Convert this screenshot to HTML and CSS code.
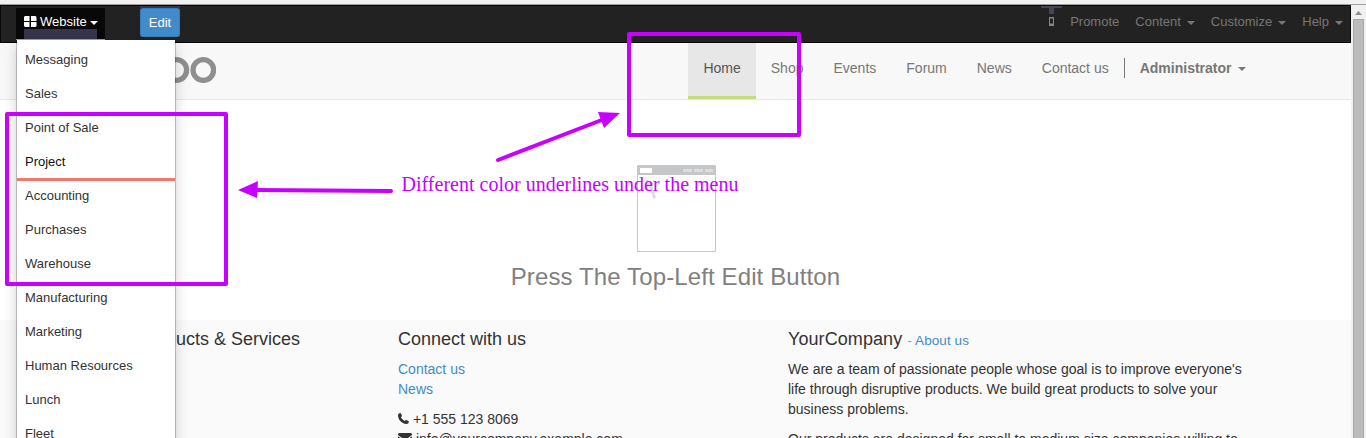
FILE: index.html
```html
<!DOCTYPE html>
<html lang="en">
<head>
<meta charset="utf-8">
<title>Home | YourCompany</title>
<link rel="stylesheet" href="styles.css">
</head>
<body>
<div class="chrome-edge"></div>
<div class="viewport">
  <div class="page">
    <nav class="admin-bar">
      <div class="app-switch">
        <a class="app-toggle">
          <svg class="icon-grid" width="13" height="11" viewBox="0 0 13 11"><path fill="#fff" d="M1 0h4.500v5H0V1zM7 0h4.500l1 1v4H7zM0 6h5.500v5H1l-1-1zM7 6h5.500v4l-1 1H7z"/></svg>
          <span>Website</span><i class="caret"></i>
        </a>
        <ul class="app-menu">
          <li>Messaging</li><li>Sales</li><li>Point of Sale</li><li class="active">Project</li><li>Accounting</li><li>Purchases</li><li>Warehouse</li><li>Manufacturing</li><li>Marketing</li><li>Human Resources</li><li>Lunch</li><li>Fleet</li>
        </ul>
      </div>
      <div class="edit-wrap"><a class="edit">Edit</a></div>
      <div class="tools">
        <a class="mobile"><svg width="21" height="21" viewBox="0 0 21 21"><path fill="#454357" d="M0 0h21v2h-8v6H8V2H0z"/><path fill="#868686" fill-rule="evenodd" d="M8 11h5v9H8zM9 12.500v5h3v-5z"/></svg></a>
        <a>Promote</a>
        <a>Content<i class="caret"></i></a>
        <a>Customize<i class="caret"></i></a>
        <a>Help<i class="caret"></i></a>
      </div>
    </nav>
    <header class="site-header">
      <svg class="logo" width="100" height="30" viewBox="0 0 100 30"><g fill="none" stroke="#8f8f8f" stroke-width="5.300"><circle cx="16" cy="15" r="10.300"/><circle cx="60.300" cy="15" r="10.300"/><circle cx="87.300" cy="15" r="10.300"/></g></svg>
      <nav class="site-nav">
        <a class="current">Home</a><a>Shop</a><a>Events</a><a>Forum</a><a>News</a><a>Contact us</a>
        <a class="user"><b>Administrator</b><i class="caret"></i></a>
      </nav>
    </header>
    <main class="hero">
      <svg width="80" height="87" viewBox="0 0 80 87"><path fill="#c5c6c8" d="M1 0h77l1 1v9H0V1z"/><path fill="none" stroke="#c5c6c8" d="M.5 9v77.500h78V9"/><path fill="#fff" d="M3 3h12v5H3z"/><path fill="#dcdddf" d="M46 4h9v3h-9zM57 4h9v3h-9zM68 4h8v3h-8z"/><path fill="#dcdddf" d="M9 14l8 4-2 2 4 12.500-2.500 1.500-4.500-12-3 2z"/></svg>
      <h2>Press The Top-Left Edit Button</h2>
    </main>
    <footer class="footer">
      <section class="products"><h4>Our Products &amp; Services</h4></section>
      <section class="connect">
        <h4>Connect with us</h4>
        <p><a>Contact us</a><br><a>News</a></p>
        <p><svg class="phone" width="11" height="11" viewBox="0 0 11 11"><path fill="#333" d="M2.300 0Q3 0 4 2.800 4 3.500 2.900 4.200 4 6.600 6.700 8 7.500 6.900 8.100 6.900 11 8 11 8.700 10.600 11 8.500 11C4 11 0 6.500 0 2.500 0 .700 1.500 0 2.300 0z"/></svg> +1 555 123 8069<br>
        <svg class="mail" width="14" height="11" viewBox="0 0 14 11"><path fill="#333" d="M1 0h12l1 1v1L8 6.500H6L0 2V1zM0 3.300L6 7.800h2l6-4.500V11H0z"/></svg> info@yourcompany.example.com</p>
      </section>
      <section class="about">
        <h4>YourCompany <small>- <a>About us</a></small></h4>
        <p>We are a team of passionate people whose goal is to improve everyone's<br>life through disruptive products. We build great products to solve your<br>business problems.</p>
        <p>Our products are designed for small to medium size companies willing to</p>
      </section>
    </footer>
  </div>
  <div class="scrollbar"><svg width="15" height="14" viewBox="0 0 15 14"><path fill="#8e8e8e" d="M4 10l3.500-4 3.500 4z"/></svg><div class="thumb"></div></div>
</div>
<svg class="annotations" width="1366" height="438" viewBox="0 0 1366 438">
  <g fill="none" stroke="#c800ff" stroke-width="4" stroke-linejoin="round" stroke-linecap="round">
    <rect x="7" y="114" width="219" height="170"/><rect x="629" y="34" width="170" height="101"/>
    <path d="M391 191L256 190M498 160L603 119.500"/>
  </g>
  <path fill="#c800ff" d="M238 190l20-9-1 17zM620 113l-22-1 6 16z"/>
  <text x="401.500" y="191" textLength="337">Different color underlines under the menu</text>
</svg>
</body>
</html>
```
FILE: styles.css
```css
* { box-sizing: border-box; }
body { margin: 0; width: 1366px; height: 438px; overflow: hidden; position: relative; background: #fff; color: #333; font: 14px/20px "Liberation Sans", Arial, sans-serif; }
svg { flex: none; }
.chrome-edge { height: 5px; background: #f2f1f0; border-bottom: 1px solid #a09f9e; }
.viewport { display: flex; height: 433px; }
.page { width: 1351px; height: 433px; overflow: hidden; }
.caret { display: inline-block; border: 4px solid transparent; border-top-color: currentColor; border-bottom: 0; vertical-align: middle; }

.admin-bar { display: flex; align-items: flex-start; height: 38px; background: #222; border: 1px solid #080808; font-size: 13px; color: #777; }
.app-switch { position: relative; margin: 2px 0 0 15px; }
.app-toggle { display: flex; align-items: center; width: 89px; height: 32px; padding: 0 0 4px 8px; background: linear-gradient(#36344a, #36344a) 8px 21px / 73px 10px no-repeat #080808; border-bottom: 1px solid #9cab78; color: #fff; }
.icon-grid { margin-bottom: 1px; }
.app-toggle span { margin-left: 3px; }
.app-toggle .caret { margin-left: 3px; margin-top: 2px; }
.app-menu { position: absolute; z-index: 2; top: 32px; left: 0; width: 160px; margin: 0; padding: 5px 0; list-style: none; background: #fff; border: 1px solid rgba(0,0,0,.2); border-top: 0; background-clip: padding-box; box-shadow: 0 6px 12px rgba(0,0,0,.175); color: #333; }
.app-menu li { height: 34px; padding: 5px 8px; border-bottom: 3px solid transparent; }
.app-menu .active { border-color: #f0776c; color: #111; }
.edit-wrap { margin-left: 35px; padding-top: 2px; background: #36344a; }
.edit { display: block; height: 29px; width: 40px; padding-top: 4px; text-align: center; background: #428bca; border: 1px solid #357ebd; border-radius: 3px; color: #fff; }
.tools { display: flex; gap: 16px; margin-left: auto; padding-right: 7px; }
.tools a { padding-top: 6px; }
.tools .mobile { padding: 0; margin-right: -8px; }
.tools .caret { margin-left: 6px; }

.site-header { display: flex; justify-content: space-between; height: 57px; background: #f8f8f8; border-bottom: 1px solid #e7e7e7; padding: 0 90.5px 0 116px; color: #777; }
.logo { margin-top: 12px; }
.site-nav { display: flex; }
.site-nav a { padding: 15px 15px 0; }
.site-nav .current { background: #e7e7e7; border-bottom: 3px solid #c1df7c; color: #555; }
.site-nav .user { display: flex; align-items: center; align-self: flex-start; height: 20px; margin-top: 15px; padding-top: 0; border-left: 1px solid #777; }
.user .caret { margin-left: 6px; margin-top: 2px; }

.hero { display: flex; flex-direction: column; align-items: center; height: 220px; padding-top: 65px; }
.hero svg { margin-left: 3px; }
.hero h2 { margin: 12px 0 0; font-size: 24px; line-height: 26px; font-weight: 400; letter-spacing: .12px; color: #808080; }

.footer { display: grid; grid-template-columns: 390px 390px 1fr; height: 130px; padding: 9px 0 0 8px; background: #fafafa; }
.footer .products { padding-left: 95px; }
.footer h4 { height: 20px; margin: 0 0 10px; font-size: 18px; line-height: 20px; font-weight: 400; }
.footer .about h4 { letter-spacing: .08px; }
.footer small { font-size: 13.500px; line-height: 1; color: #999; }
.footer p { margin: 0 0 10px; white-space: nowrap; }
.footer a { color: #428bca; }

.scrollbar { width: 15px; background: #f1f1f1; padding: 0 2px; }
.scrollbar svg { display: block; margin-left: -2px; }
.thumb { width: 11px; height: 430px; border: 1px solid #a8a8a8; background: #bcbcbc; }

.annotations { position: absolute; z-index: 5; top: 0; left: 0; }
.annotations text { fill: #c800ff; font: 20px "Liberation Serif", "Times New Roman", serif; }
```
